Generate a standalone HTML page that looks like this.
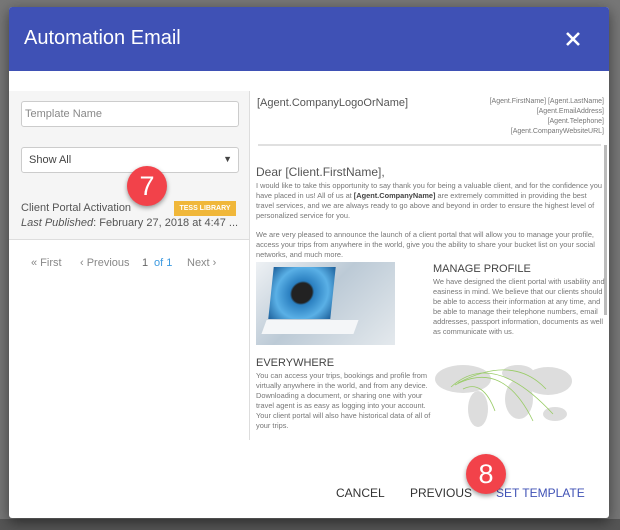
<!DOCTYPE html>
<html><head><meta charset="utf-8"><style>
*{margin:0;padding:0;box-sizing:border-box}
body{width:620px;height:530px;background:#6b6b6b;font-family:"Liberation Sans",sans-serif;position:relative;overflow:hidden}
.a{position:absolute}
.modal{left:9px;top:7px;width:600px;height:511px;background:#fff;border-radius:3px;overflow:hidden;box-shadow:0 4px 14px rgba(0,0,0,.5)}
.hdr{left:0;top:0;width:600px;height:64px;background:#3f51b5;color:#fff}
.t{font-size:8px;color:#777;line-height:10px}
.badge{width:40px;height:40px;border-radius:50%;background:#f2424a;color:#fff;font-size:27px;text-align:center;line-height:40px;box-shadow:0 2px 5px rgba(0,0,0,.4)}
.pg{position:absolute;top:250px;font-size:11px;color:#888}
</style></head><body>
<div class="a" style="left:0;top:0;width:620px;height:530px;background:#777"></div>
<div class="a" style="left:0;top:519px;width:620px;height:11px;background:#555"></div>
<div class="a modal">
 <div class="a hdr">
  <div class="a" style="left:15px;top:20px;font-size:20px">Automation Email</div>
  <svg class="a" style="left:557px;top:25px" width="14" height="14"><path d="M1 1L13 13M13 1L1 13" stroke="#fff" stroke-width="2.6"/></svg>
 </div>
 <div class="a" style="left:0;top:84px;width:240px;height:149px;background:#f5f5f5"></div>
 <div class="a" style="left:0;top:232px;width:240px;height:1px;background:#ddd"></div>
 <div class="a" style="left:240px;top:84px;width:1px;height:349px;background:#ddd"></div>
 <div class="a" style="left:12px;top:94px;width:218px;height:26px;border:1px solid #ccc;border-radius:3px;background:#fff;font-size:11px;color:#888;padding:6px 3px">Template Name</div>
 <div class="a" style="left:12px;top:140px;width:218px;height:26px;border:1px solid #ccc;border-radius:3px;background:#fff;font-size:11px;color:#444;padding:6px 7px">Show All<span style="position:absolute;right:6px;top:6px;font-size:9px">▼</span></div>
 <div class="a" style="left:12px;top:195px;font-size:11px;color:#555">Client Portal Activation</div>
 <div class="a" style="left:165px;top:194px;width:62px;height:15px;background:#f0b73a;color:#fff;font-size:7px;font-weight:bold;text-align:center;line-height:15px">TESS LIBRARY</div>
 <div class="a" style="left:12px;top:210px;font-size:11px;color:#555"><i>Last Published</i>: February 27, 2018 at 4:47 ...</div>
 <span class="pg" style="left:22px">« First</span>
 <span class="pg" style="left:71px">‹ Previous</span>
 <span class="pg" style="left:133px;color:#666">1</span>
 <span class="pg" style="left:145px;color:#3d9ae0">of 1</span>
 <span class="pg" style="left:178px">Next ›</span>
 <div class="a" style="left:248px;top:90px;font-size:11px;color:#555">[Agent.CompanyLogoOrName]</div>
 <div class="a t" style="left:430px;top:90px;width:165px;text-align:right;font-size:7px;line-height:10px">[Agent.FirstName] [Agent.LastName]<br>[Agent.EmailAddress]<br>[Agent.Telephone]<br>[Agent.CompanyWebsiteURL]</div>
 <div class="a" style="left:249px;top:137px;width:343px;height:2px;background:#e0e0e0"></div>
 <div class="a" style="left:595px;top:138px;width:3px;height:170px;background:#bbb"></div>
 <div class="a" style="left:247px;top:158px;font-size:12px;color:#555">Dear [Client.FirstName],</div>
 <div class="a t" style="left:247px;top:174px;width:350px;font-size:7.4px">I would like to take this opportunity to say thank you for being a valuable client, and for the confidence you have placed in us! All of us at <b style="color:#444">[Agent.CompanyName]</b> are extremely committed in providing the best travel services, and we are always ready to go above and beyond in order to ensure the highest level of personalized service for you.</div>
 <div class="a t" style="left:247px;top:223px;width:350px;font-size:7.4px">We are very pleased to announce the launch of a client portal that will allow you to manage your profile, access your trips from anywhere in the world, give you the ability to share your bucket list on your social networks, and much more.</div>
 <div class="a" style="left:247px;top:255px;width:139px;height:83px;background:linear-gradient(135deg,#eef1f4,#bccad6 45%,#e4e9ed);overflow:hidden">
  <div class="a" style="left:15px;top:5px;width:62px;height:52px;background:radial-gradient(circle at 50% 50%,#222 0 10px,#2a7fc0 12px,#5ab0e6 26px,#1c5f9a);transform:skewX(-6deg)"></div>
  <div class="a" style="left:8px;top:58px;width:92px;height:14px;background:#f4f6f8;transform:skewX(-20deg)"></div>
 </div>
 <div class="a" style="left:424px;top:256px;font-size:11px;color:#444">MANAGE PROFILE</div>
 <div class="a t" style="left:424px;top:270px;width:175px;font-size:7.4px">We have designed the client portal with usability and easiness in mind. We believe that our clients should be able to access their information at any time, and be able to manage their telephone numbers, email addresses, passport information, documents as well as communicate with us.</div>
 <div class="a" style="left:247px;top:350px;font-size:11px;color:#444">EVERYWHERE</div>
 <div class="a t" style="left:247px;top:364px;width:175px;font-size:7.4px">You can access your trips, bookings and profile from virtually anywhere in the world, and from any device. Downloading a document, or sharing one with your travel agent is as easy as logging into your account. Your client portal will also have historical data of all of your trips.</div>
 <svg class="a" style="left:424px;top:352px" width="140" height="72"><g fill="#ddd"><ellipse cx="30" cy="20" rx="28" ry="14"/><ellipse cx="45" cy="50" rx="10" ry="18"/><ellipse cx="85" cy="14" rx="16" ry="8"/><ellipse cx="86" cy="40" rx="14" ry="20"/><ellipse cx="115" cy="22" rx="24" ry="14"/><ellipse cx="122" cy="55" rx="12" ry="7"/></g><g fill="none" stroke="#9c6" stroke-width="0.8"><path d="M18 28Q60-10 120 55"/><path d="M22 26Q70 0 100 62"/><path d="M30 30Q50 20 62 52"/><path d="M25 24Q80-5 113 30"/></g></svg>
 <div class="a" style="left:327px;top:479px;font-size:12px;color:#333">CANCEL</div>
 <div class="a" style="left:401px;top:479px;font-size:12px;color:#333">PREVIOUS</div>
 <div class="a" style="left:487px;top:479px;font-size:12px;color:#3f51b5">SET TEMPLATE</div>
</div>
<div class="a badge" style="left:127px;top:166px">7</div>
<div class="a badge" style="left:466px;top:454px">8</div>
</body></html>
